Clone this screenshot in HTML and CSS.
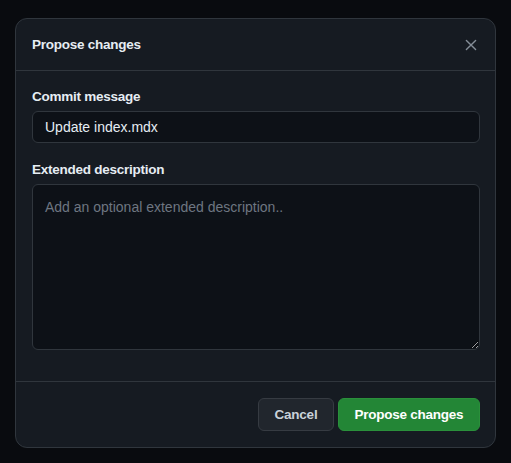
FILE: index.html
```html
<!DOCTYPE html>
<html lang="en">
<head>
<meta charset="utf-8">
<title>Propose changes</title>
<link rel="stylesheet" href="styles.css">
</head>
<body>
<div class="dialog" role="dialog" aria-labelledby="dlg-title">
  <header class="dialog-header">
    <h1 class="dialog-title" id="dlg-title">Propose changes</h1>
    <button class="close-btn" type="button" aria-label="Close">
      <svg width="16" height="16" viewBox="0 0 16 16" aria-hidden="true">
        <path d="M3.4 3.4 L12.6 12.6 M12.6 3.4 L3.4 12.6" stroke="currentColor" stroke-width="1.4" stroke-linecap="round" fill="none"/>
      </svg>
    </button>
  </header>
  <div class="dialog-body">
    <label class="field-label" for="commit-msg">Commit message</label>
    <input class="text-input" id="commit-msg" type="text" value="Update index.mdx">
    <label class="field-label field-label-spaced" for="commit-desc">Extended description</label>
    <textarea class="text-area" id="commit-desc" placeholder="Add an optional extended description.."></textarea>
  </div>
  <footer class="dialog-footer">
    <button class="btn btn-default" type="button">Cancel</button>
    <button class="btn btn-primary" type="button">Propose changes</button>
  </footer>
</div>
</body>
</html>
```

FILE: styles.css
```css
html, body {
  margin: 0;
  padding: 0;
}
body {
  background: #090b0f;
  font-family: "Liberation Sans", Arial, sans-serif;
  font-size: 14px;
  color: #e6edf3;
  width: 511px;
  height: 463px;
  overflow: hidden;
  padding: 18px 15px 0;
  box-sizing: border-box;
}
.dialog {
  width: 481px;
  height: 430px;
  box-sizing: border-box;
  background: #161b22;
  border: 1px solid #30363d;
  border-radius: 12px;
  display: flex;
  flex-direction: column;
}
.dialog-header {
  display: flex;
  align-items: center;
  justify-content: space-between;
  padding: 8px 8px 8px 16px;
  height: 52px;
  box-sizing: border-box;
  border-bottom: 1px solid #30363d;
}
.dialog-title {
  margin: 0;
  font-size: 13.5px;
  letter-spacing: -0.25px;
  line-height: 20px;
  font-weight: 700;
  color: #e6edf3;
}
.close-btn {
  width: 32px;
  height: 32px;
  padding: 0;
  border: 0;
  background: transparent;
  color: #848d97;
  display: flex;
  align-items: center;
  justify-content: center;
  margin-top: 1px;
}
.dialog-body {
  display: flex;
  flex-direction: column;
  padding: 16px 16px 0;
  flex: 1;
  border-bottom: 1px solid #30363d;
}
.field-label {
  font-weight: 700;
  font-size: 13.5px;
  letter-spacing: -0.25px;
  line-height: 20px;
  color: #e6edf3;
  margin-bottom: 4px;
}
.field-label-spaced {
  margin-top: 17px;
}
.text-input,
.text-area {
  box-sizing: border-box;
  width: 448px;
  background: #0d1117;
  border: 1px solid #30363d;
  border-radius: 6px;
  color: #e6edf3;
  font-family: inherit;
  font-size: 14px;
  padding: 0 12px;
  outline: none;
  margin: 0;
}
.text-input {
  height: 32px;
  line-height: 20px;
}
.text-area {
  height: 166px;
  padding: 11px 12px;
  line-height: 22px;
  resize: vertical;
}
.text-area::placeholder {
  color: #6e7681;
}
.dialog-footer {
  display: flex;
  justify-content: flex-end;
  gap: 4px;
  padding: 16px 15px 16px 16px;
}
.btn {
  height: 33px;
  box-sizing: border-box;
  border-radius: 6px;
  font-family: inherit;
  font-size: 13.5px;
  letter-spacing: -0.25px;
  font-weight: 700;
  line-height: 20px;
  padding: 0;
  margin: 0;
  white-space: nowrap;
  text-align: center;
}
.btn-default {
  width: 76px;
  background: #21262d;
  border: 1px solid #363b42;
  color: #c9d1d9;
}
.btn-primary {
  width: 142px;
  background: #238636;
  border: 1px solid #2a903b;
  color: #ffffff;
}
```
